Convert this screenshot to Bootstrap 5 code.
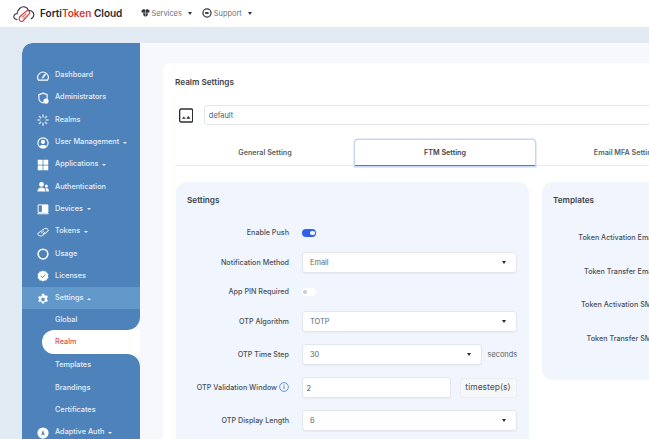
<!DOCTYPE html>
<html lang="en">
<head>
<meta charset="utf-8">
<title>Realm Settings</title>
<link href="https://cdn.jsdelivr.net/npm/bootstrap@5.3.0/dist/css/bootstrap.min.css" rel="stylesheet">
<style>
html,body{height:439px;overflow:hidden;}
body{font-family:Inter,"Liberation Sans",sans-serif;font-size:7.2px;background:#e2eaf4;color:#4a4f57;width:649px;}
.topbar{height:27px;background:#fff;padding-left:13px;}
.brand{font-size:10px;font-weight:600;color:#23262b;margin-left:5px;width:101px;}
.brand span{color:#d8362c;}
.topnav{font-size:7.4px;color:#6c7178;margin-right:10.5px;}
.topnav svg{margin-right:1.5px;}
.tcaret{width:0;height:0;border-left:2.5px solid transparent;border-right:2.5px solid transparent;border-top:3px solid #33373d;margin-left:6px;}
.shell{height:396px;margin:16px 0 0 22px;width:900px;background:#f7f8fb;border-top-left-radius:10px;overflow:hidden;}
.side{width:118px;flex:none;}
.seg{background:#4d82bb;}
.seg-a{padding-top:21px;border-top-left-radius:10px;border-bottom-right-radius:13px;}
.seg-b{border-top-right-radius:13px;}
.item{height:22.3px;padding:1px 0 0 15px;color:#e6eef7;font-size:7.3px;font-weight:500;white-space:nowrap;}
.item svg{width:12px;height:12px;margin-right:6px;flex:none;}
.item.on{background:#6398cb;}
.sub{padding-left:33px;}
.item.tail{height:21px;}
.scaret{width:0;height:0;border-left:2px solid transparent;border-right:2px solid transparent;border-top:2px solid #eaf1f8;margin-left:4px;}
.scaret.up{border-top:0;border-bottom:2px solid #eaf1f8;}
.realmrow{background:#4d82bb;height:24px;padding-left:20px;}
.realmpill{background:#fff;height:100%;border-radius:12px 0 0 12px;padding:1px 0 0 13px;color:#d9534f;font-size:7.3px;font-weight:500;}
.pane{flex:1;padding:20px 23px;}
.maincard{width:720px;height:420px;background:#fff;border-radius:8px;padding:13px 12px 12px;}
.maincard h6{font-size:8.2px;font-weight:600;color:#3e434a;margin:0;line-height:12px;}
.namerow{margin-top:17px;}
.nameinput.form-control{height:20px;font-size:7.4px;color:#555a61;border:1px solid #e3e6ea;border-radius:3px;padding:0 3.5px;margin-left:11px;box-shadow:none;min-height:0;}
.tabbar{margin-top:15px;border-bottom:1px solid #e9ecef;height:26px;flex-wrap:nowrap;}
.tabbar .nav-link{width:180px;height:26px;padding:1px 0 0;border:0;border-radius:0;font-size:7.2px;font-weight:600;color:#5a5f66;background:none;flex:none;display:flex;align-items:center;justify-content:center;white-space:nowrap;}
.tabbar .nav-link.active{color:#3e434a;border-radius:3px 3px 0 0;border-bottom:1.5px solid #4f7fd9;box-shadow:0 0 0 1.5px #c6d6f8;}
.panes{margin:16px 0 0 1px;gap:13px;}
.panel{background:#f0f5fe;border-radius:11px;padding:12px 11px;flex:none;}
.settings{width:353px;height:300px;}
.templates{width:180px;height:198px;}
.frow{margin-bottom:12px;height:21px;}
.frow.short{height:14px;}
.flabel{width:102px;flex:none;text-align:right;font-size:7.2px;font-weight:500;color:#4a4f57;margin-right:12.5px;padding-top:1px;white-space:nowrap;}
.formstack{margin-top:20px;}
.fctl{width:215px;}
.form-select.pick,.form-control.pick{height:21px;font-size:7.4px;color:#63676d;border:1px solid #e3e6ea;border-radius:3px;padding:1px 7.5px 0;background-image:none;box-shadow:0 1px 1px rgba(0,0,0,.04);min-height:0;}
.form-control.pick{padding:1px 4px 0;color:#4a4f57;}
.pickwrap{position:relative;}
.timestep{width:180px;}
.valinput{width:149px;flex:none;}
.pickcaret{position:absolute;right:11px;top:9px;width:0;height:0;border-left:2.5px solid transparent;border-right:2.5px solid transparent;border-top:3px solid #26292e;pointer-events:none;}
.unit{font-size:7.4px;color:#5a5f66;margin-left:6px;padding-top:1px;white-space:nowrap;}
.unitbox{width:57px;height:20px;background:#f6f7f9;border:1px solid #eceef1;border-radius:3px;margin-left:9px;font-size:8.5px;color:#4a4f57;flex:none;}
.sw{width:14.5px;height:7.5px;border-radius:4px;position:relative;display:block;}
.sw.onn{background:#2f62e8;}
.sw.off{background:#fff;}
.knob{position:absolute;top:1.5px;width:4.5px;height:4.5px;border-radius:50%;}
.sw.onn .knob{right:1.5px;background:#fff;}
.sw.off .knob{left:1px;background:#c9ccd1;}
.tlabels{margin-top:27px;}
.tlabel{width:103px;text-align:right;font-size:7.2px;font-weight:500;color:#4a4f57;height:33.5px;white-space:nowrap;}
</style>
</head>
<body>
<svg width="0" height="0" class="position-absolute">
<defs>
<symbol id="i-dash" viewBox="0 0 16 16"><path d="M2 13.5a7 7 0 1 1 12 0z" fill="none" stroke="#fff" stroke-width="1.5" stroke-linejoin="round"/><path d="M7 11l4.5-6" stroke="#fff" stroke-width="1.8"/></symbol>
<symbol id="i-admin" viewBox="0 0 16 16"><path d="M8 1.5l5.5 2v4a7 7 0 0 1-5.500 7 7 7 0 0 1-5.500-7v-4z" fill="none" stroke="#fff" stroke-width="1.5"/><circle cx="12" cy="12" r="3.5" fill="#fff"/></symbol>
<symbol id="i-realm" viewBox="0 0 16 16"><path d="M8 .5v4M8 11.500v4M.5 8h4M11.500 8h4M2.700 2.700l2.800 2.800M10.500 10.500l2.800 2.800M13.300 2.700l-2.800 2.800M5.500 10.500l-2.800 2.800" stroke="#fff" stroke-width="1.500"/></symbol>
<symbol id="i-user" viewBox="0 0 16 16"><circle cx="8" cy="8" r="6.800" fill="none" stroke="#fff" stroke-width="1.5"/><circle cx="8" cy="6.500" r="2.700" fill="#fff"/><path d="M3.500 12.500c1-2.500 8-2.500 9 0a6 6 0 0 1-9 0z" fill="#fff"/></symbol>
<symbol id="i-apps" viewBox="0 0 16 16"><path d="M1 1h6.500v6.500H1zM8.500 1H15v6.500H8.500zM1 8.500h6.500V15H1zM8.500 8.500H15V15H8.500z" fill="#fff"/></symbol>
<symbol id="i-auth" viewBox="0 0 16 16"><circle cx="6" cy="4.500" r="3.200" fill="#fff"/><path d="M.5 14c0-7 11-7 11 0z" fill="#fff"/><circle cx="12.500" cy="6.500" r="2" fill="#fff"/><path d="M12.500 14H16c0-4-2.500-5-5-4.500 1 1 1.500 3 1.500 4.500z" fill="#fff"/></symbol>
<symbol id="i-dev" viewBox="0 0 16 16"><path d="M1.500 2.500h13v10h-13z" fill="none" stroke="#fff" stroke-width="1.300"/><path d="M6.500 2.500h8v10h-8zM.5 13.500h15V15H.5z" fill="#fff"/></symbol>
<symbol id="i-tok" viewBox="0 0 16 16"><path d="M1 10L10 3.500c2-1.200 5.500.5 5 3L7 13c-2 1.200-7-.8-6-3z" fill="none" stroke="#fff" stroke-width="1.300"/><path d="M5.500 9.500l3.500-2.800M7.500 11l3.500-2.800" stroke="#fff" stroke-width="1.200"/></symbol>
<symbol id="i-usage" viewBox="0 0 16 16"><circle cx="8" cy="8" r="6.500" fill="none" stroke="#fff" stroke-width="2"/></symbol>
<symbol id="i-lic" viewBox="0 0 16 16"><path d="M8 .8l2 1.300 2.400-.2.900 2.200 2 1.300-.7 2.600.7 2.600-2 1.300-.9 2.200-2.400-.2L8 15.200l-2-1.300-2.400.2-.9-2.200-2-1.300.7-2.600L.7 5.400l2-1.300.9-2.200 2.400.2z" fill="#fff"/><path d="M5 8l2.200 2.200L11 6.200" fill="none" stroke="#4d82bb" stroke-width="1.300"/></symbol>
<symbol id="i-gear" viewBox="0 0 16 16"><path fill-rule="evenodd" d="M6.500 1h3l.4 2 1.300.7 1.900-.8 1.500 2.600-1.500 1.300v1.400l1.500 1.300-1.500 2.600-1.900-.8-1.300.7-.4 2h-3l-.4-2-1.300-.7-1.900.8L1.400 10.500l1.500-1.300V7.800L1.400 6.500l1.500-2.600 1.900.8 1.300-.7zM8 6a2.500 2.500 0 1 0 0 5 2.500 2.500 0 0 0 0-5z" fill="#fff"/></symbol>
<symbol id="i-adapt" viewBox="0 0 16 16"><circle cx="8" cy="8" r="7.500" fill="#fff"/><path d="M8 4l-2.500 7.500L8 9.800l2.500 1.700z" fill="#4d82bb"/></symbol>
</defs>
</svg>

<nav class="topbar d-flex align-items-center">
  <svg width="22" height="18" viewBox="0 0 22 18"><path d="M4.500 14.500C1.500 14.500.5 12.500 1 10.800 1.500 9.300 3 8.600 4 8.800 4.500 4 8.500 1 12 2c2 .6 3 2.200 3.500 3.500 3-.3 5.500 2 5.300 4.500-.2 2-1.500 3.500-3 4" fill="none" stroke="#2a2d32" stroke-width="1.100"/><path d="M6.500 12L13.500 6c1-.8 2.500 0 3 .8.500.9.300 1.700-.5 2.400L10 16c-1 .9-2.500.5-3.200-.4-.6-.8-.7-2.600-.3-3.600z" fill="#fff" stroke="#d8453c" stroke-width="1.200"/><path d="M9 12.500l4.500-3.800M10.500 14l4-3.500" stroke="#e5736c" stroke-width="1.100"/></svg>
  <div class="brand">Forti<span>Token</span> Cloud</div>
  <div class="topnav d-flex align-items-center">
    <svg width="9" height="10" viewBox="0 0 16 16"><path d="M1 3l4-2 3 1.500L11 1l4 2v4l-3 1.500V12l-4 3-4-3V8.500L1 7z" fill="#33373d"/><path d="M8 2.500V15M1 7l7 1.500L15 7" stroke="#fff" stroke-width=".8" fill="none"/></svg>
    <span>Services</span><i class="tcaret"></i>
  </div>
  <div class="topnav d-flex align-items-center">
    <svg width="10" height="10" viewBox="0 0 16 16"><circle cx="8" cy="8" r="6.500" fill="none" stroke="#33373d" stroke-width="2"/><path d="M5 6.500h5.500v3H5z" fill="#33373d"/></svg>
    <span>Support</span><i class="tcaret"></i>
  </div>
</nav>

<div class="shell d-flex">
  <aside class="side">
    <div class="seg seg-a">
      <div class="item d-flex align-items-center"><svg><use href="#i-dash"/></svg>Dashboard</div>
      <div class="item d-flex align-items-center"><svg><use href="#i-admin"/></svg>Administrators</div>
      <div class="item d-flex align-items-center"><svg><use href="#i-realm"/></svg>Realms</div>
      <div class="item d-flex align-items-center"><svg><use href="#i-user"/></svg>User Management<i class="scaret"></i></div>
      <div class="item d-flex align-items-center"><svg><use href="#i-apps"/></svg>Applications<i class="scaret"></i></div>
      <div class="item d-flex align-items-center"><svg><use href="#i-auth"/></svg>Authentication</div>
      <div class="item d-flex align-items-center"><svg><use href="#i-dev"/></svg>Devices<i class="scaret"></i></div>
      <div class="item d-flex align-items-center"><svg><use href="#i-tok"/></svg>Tokens<i class="scaret"></i></div>
      <div class="item d-flex align-items-center"><svg><use href="#i-usage"/></svg>Usage</div>
      <div class="item d-flex align-items-center"><svg><use href="#i-lic"/></svg>Licenses</div>
      <div class="item on d-flex align-items-center"><svg><use href="#i-gear"/></svg>Settings<i class="scaret up"></i></div>
      <div class="item sub tail d-flex align-items-center">Global</div>
    </div>
    <div class="realmrow"><div class="realmpill d-flex align-items-center">Realm</div></div>
    <div class="seg seg-b">
      <div class="item sub d-flex align-items-center">Templates</div>
      <div class="item sub d-flex align-items-center">Brandings</div>
      <div class="item sub d-flex align-items-center">Certificates</div>
      <div class="item d-flex align-items-center"><svg><use href="#i-adapt"/></svg>Adaptive Auth<i class="scaret"></i></div>
    </div>
  </aside>

  <main class="pane">
    <div class="maincard">
      <h6>Realm Settings</h6>
      <div class="namerow d-flex align-items-center">
        <svg class="ms-1 flex-none" width="15" height="15" viewBox="0 0 15 15"><rect x=".7" y=".7" width="13.6" height="13.6" rx="1.5" fill="#fff" stroke="#2b2e33" stroke-width="1.4"/><path d="M3 11l2-2.500L7 11zM7.500 11l2.300-3L12 11z" fill="#2b2e33"/></svg>
        <input class="form-control nameinput" value="default" aria-label="Realm name">
      </div>
      <ul class="nav tabbar">
        <li class="nav-item"><a class="nav-link" href="#">General Setting</a></li>
        <li class="nav-item"><a class="nav-link active" href="#">FTM Setting</a></li>
        <li class="nav-item"><a class="nav-link" href="#">Email MFA Setting</a></li>
      </ul>
      <div class="panes d-flex">
        <section class="panel settings">
          <h6>Settings</h6>
          <div class="formstack">
            <div class="frow short d-flex align-items-center"><div class="flabel">Enable Push</div><span class="sw onn"><span class="knob"></span></span></div>
            <div class="frow d-flex align-items-center"><div class="flabel">Notification Method</div><div class="fctl pickwrap"><select class="form-select pick"><option>Email</option></select><i class="pickcaret"></i></div></div>
            <div class="frow short d-flex align-items-center"><div class="flabel">App PIN Required</div><span class="sw off"><span class="knob"></span></span></div>
            <div class="frow d-flex align-items-center"><div class="flabel">OTP Algorithm</div><div class="fctl pickwrap"><select class="form-select pick"><option>TOTP</option></select><i class="pickcaret"></i></div></div>
            <div class="frow d-flex align-items-center"><div class="flabel">OTP Time Step</div><div class="pickwrap timestep"><select class="form-select pick"><option>30</option></select><i class="pickcaret"></i></div><span class="unit">seconds</span></div>
            <div class="frow d-flex align-items-center"><div class="flabel">OTP Validation Window <svg width="10" height="10" viewBox="0 0 10 10" class="align-text-bottom"><circle cx="5" cy="5" r="4.4" fill="none" stroke="#4a78d8" stroke-width=".8"/><path d="M5 4.200v3M5 2.500v1" stroke="#4a78d8" stroke-width=".9"/></svg></div><input class="form-control pick valinput" value="2" aria-label="Window"><div class="unitbox d-flex align-items-center justify-content-center">timestep(s)</div></div>
            <div class="frow d-flex align-items-center"><div class="flabel">OTP Display Length</div><div class="fctl pickwrap"><select class="form-select pick"><option>6</option></select><i class="pickcaret"></i></div></div>
          </div>
        </section>
        <section class="panel templates">
          <h6>Templates</h6>
          <div class="tlabels">
            <div class="tlabel">Token Activation Email</div>
            <div class="tlabel">Token Transfer Email</div>
            <div class="tlabel">Token Activation SMS</div>
            <div class="tlabel">Token Transfer SMS</div>
          </div>
        </section>
      </div>
    </div>
  </main>
</div>
<script src="https://cdn.jsdelivr.net/npm/bootstrap@5.3.0/dist/js/bootstrap.bundle.min.js"></script>
</body>
</html>
